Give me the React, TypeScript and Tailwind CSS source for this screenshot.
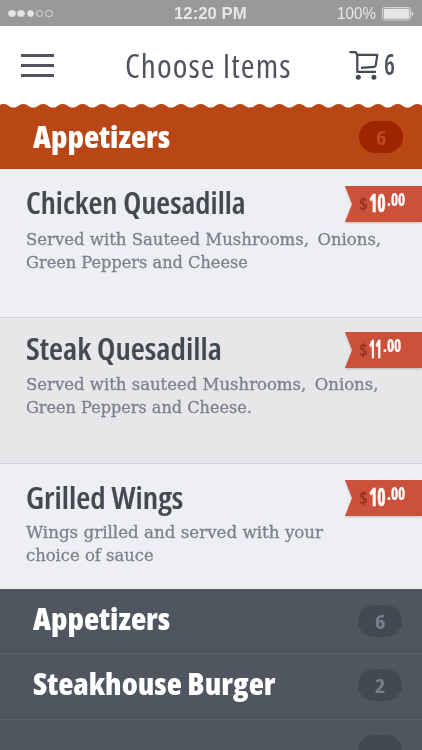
import { useLayoutEffect, useRef, useState } from "react";
import { clsx } from "clsx";

const SANS = "font-['Open_Sans','Noto_Sans',sans-serif] font-stretch-75%";
const SLAB = "font-['DejaVu_Serif_Condensed','DejaVu_Serif',serif]";

// One line of text, condensed horizontally to an exact width.
function Fit({ text, width, className }: { text: string; width: number; className?: string }) {
  const ref = useRef<HTMLSpanElement>(null);
  const [scale, setScale] = useState(1);
  useLayoutEffect(() => {
    if (ref.current) setScale(width / ref.current.offsetWidth);
  }, [width, text]);
  return (
    <span className={clsx("block whitespace-nowrap", className)} style={{ width }}>
      <span ref={ref} className="inline-block origin-left" style={{ transform: `scaleX(${scale})` }}>
        {text}
      </span>
    </span>
  );
}

function StatusBar() {
  return (
    <div className="flex h-[26px] shrink-0 items-center bg-[#999999] pl-[8px] pr-[8px] text-[#e6e6e6]">
      <div className="flex w-[166px] gap-[1.700px] pt-[1px]">
        {[0, 1, 2, 3, 4].map((i) => (
          <span key={i} className={clsx("size-[7.600px] rounded-full border border-[#dedede]", i < 3 && "bg-[#e6e6e6]")} />
        ))}
      </div>
      <Fit text="12:20 PM" width={73} className="pt-[2px] font-['Liberation_Sans',Arial,sans-serif] text-[17px] font-bold leading-[24px]" />
      <div className="ml-auto flex items-center gap-[6px]">
        <Fit text="100%" width={39} className="pt-[2px] font-['Liberation_Sans',Arial,sans-serif] text-[16px] leading-[24px]" />
        <svg width="32" height="14" viewBox="0 0 32 14" fill="#e6e6e6" className="mt-[2px]">
          <rect x=".5" y=".5" width="28" height="12.5" rx="2" fill="none" stroke="#d4d4d4" />
          <rect x="1.8" y="1.8" width="25.5" height="10" rx="1" />
          <path d="M29.8 4.5c2 .5 2 4 0 4.500z" />
        </svg>
      </div>
    </div>
  );
}

function Header() {
  return (
    <header className="flex h-[77px] shrink-0 bg-white pl-[21px] text-[#50545f]">
      <div className="flex w-[104px] flex-col gap-[7.500px] pt-[28px]">
        <span className="h-[2.500px] w-[33px] bg-[#50545f]" />
        <span className="h-[2.500px] w-[33px] bg-[#50545f]" />
        <span className="h-[2.500px] w-[33px] bg-[#50545f]" />
      </div>
      <Fit text="Choose Items" width={167} className={clsx(SANS, "pt-[20px] text-[32px] leading-[40px] tracking-[1px]")} />
      <svg width="30" height="29" viewBox="0 0 30 29" fill="none" stroke="#454b54" strokeWidth="2.200" className="ml-[57px] mt-[25px] shrink-0" strokeLinejoin="round">
        <path d="M.5 1.200H6.600L8.300 3.800V20.900H27" />
        <path d="M8.300 3.800H28.300L26.700 14.400Q26.400 15.700 25 15.800L12 16.900" />
        <circle cx="9.300" cy="26.200" r="2.500" fill="#454b54" stroke="none" />
        <circle cx="24.900" cy="26.200" r="2.500" fill="#454b54" stroke="none" />
      </svg>
      <Fit text="6" width={11} className={clsx(SANS, "ml-[5px] pt-[18px] text-[29px] font-semibold leading-[40px]")} />
    </header>
  );
}

function WaveEdge() {
  const step = 19.7;
  let d = `M${3.7 - step} 1`;
  for (let i = 0; i < 23; i++) {
    const x = 3.7 + (i - 1) * step;
    d += `C${x + 5} 1 ${x + 5} 4.600 ${x + step / 2} 4.600S${x + step - 5} 1 ${x + step} 1`;
  }
  return (
    <svg width="422" height="6" viewBox="0 0 422 6" className="block shrink-0 bg-white">
      <path d={`${d}V6H-20Z`} fill="#b94715" />
    </svg>
  );
}

function Badge({ value, active }: { value: string; active?: boolean }) {
  return (
    <div className={clsx("flex h-[32px] w-[44px] shrink-0 justify-center rounded-[16px]", active ? "bg-[#9b2600] text-[#c04a20]" : "bg-[#424951] text-[#77818c]")}>
      {value && <Fit text={value} width={10} className={clsx(SANS, "text-[20px] font-bold leading-[33px]")} />}
    </div>
  );
}

function PriceTag({ whole, wholeWidth }: { whole: string; wholeWidth: number }) {
  return (
    <div className="ml-auto h-[36px] w-[77px] shrink-0 drop-shadow-[0_1px_1px_rgba(0,0,0,0.2)]">
      <div className={clsx(SANS, "flex h-full bg-[#cc513b] pl-[14px] font-bold text-white [clip-path:polygon(0_0,100%_0,100%_100%,0_100%,7px_50%)]")}>
        <Fit text="$" width={9} className="pt-[6px] text-[17px] leading-[26px] text-[#963522]" />
        <Fit text={whole} width={wholeWidth} className="ml-[1px] pt-[2px] text-[24px] leading-[30px] [-webkit-text-stroke:0.6px_white]" />
        <Fit text=".00" width={18} className="ml-[1px] pt-[2px] text-[17px] leading-[23px] [-webkit-text-stroke:0.2px_white]" />
      </div>
    </div>
  );
}

interface Item {
  name: string;
  nameWidth: number;
  lines: [string, number][];
  whole: string;
  wholeWidth: number;
  box: string;
  head: string;
  tag: string;
  title: string;
}

const items: Item[] = [
  {
    name: "Chicken Quesadilla", nameWidth: 220, whole: "10", wholeWidth: 17,
    lines: [["Served with Sauteed Mushrooms,  Onions,", 355], ["Green Peppers and Cheese", 222]],
    box: "h-[149px] bg-[#eeeff2]", head: "h-[59px]", tag: "pt-[17px]", title: "pt-[14px]",
  },
  {
    name: "Steak Quesadilla", nameWidth: 196, whole: "11", wholeWidth: 13,
    lines: [["Served with sauteed Mushrooms,  Onions,", 352], ["Green Peppers and Cheese.", 226]],
    box: "h-[146px] bg-[#e7e7ea]", head: "h-[55px]", tag: "pt-[14px]", title: "pt-[11px]",
  },
  {
    name: "Grilled Wings", nameWidth: 157, whole: "10", wholeWidth: 17,
    lines: [["Wings grilled and served with your", 297], ["choice of sauce", 128]],
    box: "h-[125px] bg-[#eeeff2]", head: "h-[57px]", tag: "pt-[16px]", title: "pt-[14px]",
  },
];

function MenuItem({ item, last }: { item: Item; last: boolean }) {
  return (
    <article className={clsx("shrink-0 pl-[26px]", item.box, !last && "border-b border-[#d3d3d9]")}>
      <div className={clsx("flex", item.head)}>
        <Fit text={item.name} width={item.nameWidth} className={clsx(SANS, item.title, "text-[30px] font-semibold leading-[40px] text-[#434951] [-webkit-text-stroke:0.2px_#434951]")} />
        <div className={clsx("ml-auto", item.tag)}>
          <PriceTag whole={item.whole} wholeWidth={item.wholeWidth} />
        </div>
      </div>
      <div className={clsx(SLAB, "text-[17.500px] leading-[23px] text-[#7b828e] [-webkit-text-stroke:0.3px_#7b828e]")}>
        {item.lines.map(([text, width]) => (
          <Fit key={text} text={text.replace("  ", " \u200a\u200a")} width={width} />
        ))}
      </div>
    </article>
  );
}

interface Category {
  name: string;
  width: number;
  value: string;
  box: string;
  badge: string;
}

function CategoryRow({ name, width, value, box, badge }: Category) {
  return (
    <div className={clsx("flex shrink-0 pl-[33px] pr-[20px]", box)}>
      {name && <Fit text={name} width={width} className={clsx(SANS, "text-[30px] font-extrabold leading-[40px] text-white")} />}
      <div className={clsx("ml-auto", badge)}>
        <Badge value={value} />
      </div>
    </div>
  );
}

export default function App() {
  return (
    <main className="flex h-[750px] w-[422px] flex-col overflow-hidden bg-[#4f5660]">
      <StatusBar />
      <Header />
      <WaveEdge />
      <section className="flex h-[60px] shrink-0 bg-[#b94715] pl-[33px] pr-[19px]">
        <Fit text="Appetizers" width={137} className={clsx(SANS, "pt-[8px] text-[30px] font-extrabold leading-[40px] text-white")} />
        <div className="ml-auto pt-[12px]">
          <Badge value="6" active />
        </div>
      </section>
      {items.map((item, i) => (
        <MenuItem key={item.name} item={item} last={i === items.length - 1} />
      ))}
      <CategoryRow name="Appetizers" width={137} value="6" box="h-[64px] pt-[10px]" badge="pt-[6px]" />
      <CategoryRow name="Steakhouse Burger" width={243} value="2" box="h-[66px] border-t border-[#5a626c] pt-[10px]" badge="pt-[5px]" />
      <CategoryRow name="" width={1} value="" box="h-[66px] border-t border-[#5a626c] pt-[10px]" badge="pt-[5px]" />
    </main>
  );
}
